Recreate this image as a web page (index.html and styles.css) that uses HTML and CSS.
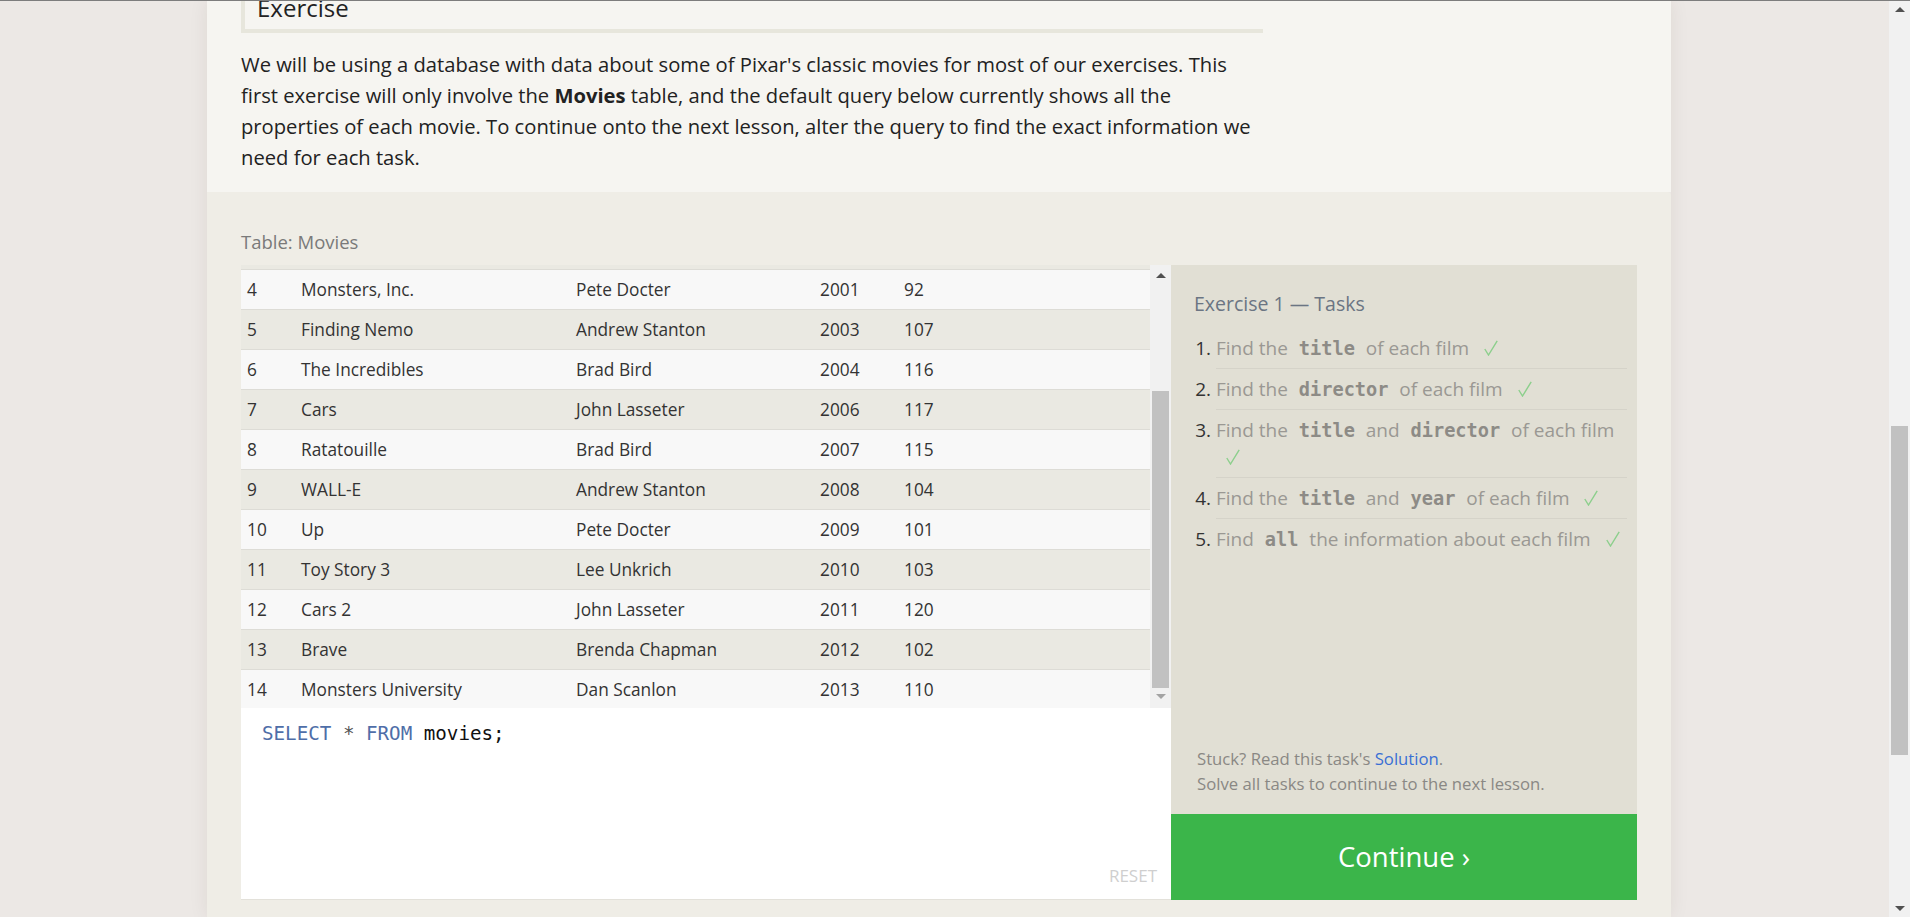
FILE: index.html
```html
<!DOCTYPE html>
<html lang="en">
<head>
<meta charset="utf-8">
<title>SQLBolt - Lesson 1</title>
<link rel="stylesheet" href="styles.css">
</head>
<body>
<div class="viewport">
  <div class="page">
    <div class="column">
      <section class="intro">
        <h2 class="box-title">Exercise</h2>
        <p class="lead">We will be using a database with data about some of Pixar's classic movies for most of our exercises. This first exercise will only involve the <strong>Movies</strong> table, and the default query below currently shows all the properties of each movie. To continue onto the next lesson, alter the query to find the exact information we need for each task.</p>
      </section>
      <section class="exercise">
        <div class="table-label">Table: Movies</div>
        <div class="workspace">
          <div class="left">
            <div class="table-wrap">
              <div class="table-scroll">
                <div class="rows">
                  <div class="row"><span>1</span><span>Toy Story</span><span>John Lasseter</span><span>1995</span><span>81</span></div>
                  <div class="row"><span>2</span><span>A Bug's Life</span><span>John Lasseter</span><span>1998</span><span>95</span></div>
                  <div class="row"><span>3</span><span>Toy Story 2</span><span>John Lasseter</span><span>1999</span><span>93</span></div>
                  <div class="row"><span>4</span><span>Monsters, Inc.</span><span>Pete Docter</span><span>2001</span><span>92</span></div>
                  <div class="row"><span>5</span><span>Finding Nemo</span><span>Andrew Stanton</span><span>2003</span><span>107</span></div>
                  <div class="row"><span>6</span><span>The Incredibles</span><span>Brad Bird</span><span>2004</span><span>116</span></div>
                  <div class="row"><span>7</span><span>Cars</span><span>John Lasseter</span><span>2006</span><span>117</span></div>
                  <div class="row"><span>8</span><span>Ratatouille</span><span>Brad Bird</span><span>2007</span><span>115</span></div>
                  <div class="row"><span>9</span><span>WALL-E</span><span>Andrew Stanton</span><span>2008</span><span>104</span></div>
                  <div class="row"><span>10</span><span>Up</span><span>Pete Docter</span><span>2009</span><span>101</span></div>
                  <div class="row"><span>11</span><span>Toy Story 3</span><span>Lee Unkrich</span><span>2010</span><span>103</span></div>
                  <div class="row"><span>12</span><span>Cars 2</span><span>John Lasseter</span><span>2011</span><span>120</span></div>
                  <div class="row"><span>13</span><span>Brave</span><span>Brenda Chapman</span><span>2012</span><span>102</span></div>
                  <div class="row"><span>14</span><span>Monsters University</span><span>Dan Scanlon</span><span>2013</span><span>110</span></div>
                </div>
              </div>
              <div class="vscroll">
                <div class="sb-btn"><span class="tri tri-up"></span></div>
                <div class="sb-track"><div class="sb-thumb"></div></div>
                <div class="sb-btn sb-btn-down"><span class="tri tri-down"></span></div>
              </div>
            </div>
            <div class="editor">
              <div class="code"><span class="kw">SELECT</span> <span class="op">*</span> <span class="kw">FROM</span> movies;</div>
              <div class="reset">RESET</div>
            </div>
          </div>
          <div class="right">
            <div class="tasks">
              <h3 class="tasks-title">Exercise 1 — Tasks</h3>
              <ol class="task-list">
                <li>Find the <code>title</code> of each film <span class="check"><svg viewBox="0 0 14 16" width="14" height="16"><polyline points="0.8,9 4.5,15 13.2,0.8"/></svg></span></li>
                <li>Find the <code>director</code> of each film <span class="check"><svg viewBox="0 0 14 16" width="14" height="16"><polyline points="0.8,9 4.5,15 13.2,0.8"/></svg></span></li>
                <li>Find the <code>title</code> and <code>director</code> of each film <span class="check"><svg viewBox="0 0 14 16" width="14" height="16"><polyline points="0.8,9 4.5,15 13.2,0.8"/></svg></span></li>
                <li>Find the <code>title</code> and <code>year</code> of each film <span class="check"><svg viewBox="0 0 14 16" width="14" height="16"><polyline points="0.8,9 4.5,15 13.2,0.8"/></svg></span></li>
                <li>Find <code>all</code> the information about each film <span class="check"><svg viewBox="0 0 14 16" width="14" height="16"><polyline points="0.8,9 4.5,15 13.2,0.8"/></svg></span></li>
              </ol>
              <div class="stuck">
                <div>Stuck? Read this task's <a href="#">Solution</a>.</div>
                <div>Solve all tasks to continue to the next lesson.</div>
              </div>
            </div>
            <div class="continue">Continue ›</div>
          </div>
        </div>
      </section>
    </div>
  </div>
  <div class="page-scrollbar">
    <div class="psb-btn"><span class="tri tri-up"></span></div>
    <div class="psb-track"><div class="psb-thumb"></div></div>
    <div class="psb-btn"><span class="tri tri-down"></span></div>
  </div>
</div>
</body>
</html>
```

FILE: styles.css
```css
* { box-sizing: border-box; }

html, body {
  margin: 0;
  padding: 0;
  height: 100%;
  overflow: hidden;
}

body {
  background: #ece8e5;
  font-family: "Open Sans", "Noto Sans", sans-serif;
  color: #222;
  border-top: 1px solid #7d7d7d;
}

.viewport {
  display: flex;
  height: 916px;
}

.page {
  flex: 1;
  padding-left: 207px;
  overflow: hidden;
}

.column {
  width: 1464px;
  height: 100%;
  display: flex;
  flex-direction: column;
  box-shadow: 0 0 18px rgba(60, 40, 30, 0.08);
}

/* intro */
.intro {
  background: #f6f5f1;
  padding: 0 34px 18px 34px;
}

.box-title {
  margin: -9px 0 0 0;
  width: 1022px;
  font-size: 24px;
  font-weight: 400;
  line-height: 32px;
  padding: 0 0 5px 12px;
  border-left: 4px solid #e7e6dc;
  border-bottom: 4px solid #e7e6dc;
  color: #222;
}

.lead {
  margin: 15.5px 0 0 0;
  width: 1022px;
  font-size: 20.2px;
  line-height: 31.3px;
  color: #222;
}

.lead strong { font-weight: 700; }

/* exercise */
.exercise {
  flex: 1;
  background: #efede6;
  padding: 38px 34px 0 34px;
  border-radius: 0 4px 0 0;
}

.table-label {
  font-size: 18.5px;
  line-height: 24px;
  color: #7a7a7a;
  margin-bottom: 11px;
}

.workspace {
  display: flex;
  height: 635px;
}

.left {
  width: 930px;
  display: flex;
  flex-direction: column;
}

.table-wrap {
  height: 443px;
  display: flex;
  background: #e7e5de;
}

.table-scroll {
  width: 909px;
  overflow: hidden;
}

.rows {
  margin-top: -115px;
}

.row {
  display: grid;
  grid-template-columns: 54px 275px 244px 84px 1fr;
  height: 40px;
  align-items: center;
  border-bottom: 1px solid #dddcd6;
  font-size: 17.3px;
  color: #333;
  background: #f8f8f8;
}

.row:nth-child(odd) { background: #eae9e2; }

.row span { padding-left: 6px; white-space: nowrap; }

.vscroll {
  width: 21px;
  background: #f1f1f1;
  display: flex;
  flex-direction: column;
}

.sb-btn {
  height: 21px;
  display: flex;
  align-items: center;
  justify-content: center;
}

.sb-btn-down { height: 17px; align-items: flex-start; padding-top: 3px; }

.sb-track {
  flex: 1;
  padding: 105px 2px 3px 2px;
}

.sb-thumb {
  height: 297px;
  background: #c1c1c1;
}

.tri {
  width: 0;
  height: 0;
  border-left: 5px solid transparent;
  border-right: 5px solid transparent;
}

.tri-up { border-bottom: 5px solid #505050; }
.tri-down { border-top: 5px solid #a3a3a3; }

.editor {
  flex: 1;
  background: #fff;
  border-bottom: 1px solid #e3e1da;
  display: flex;
  flex-direction: column;
  justify-content: space-between;
  padding: 14px 14px 12px 21px;
}

.code {
  font-family: "DejaVu Sans Mono", "Liberation Mono", monospace;
  font-size: 19.2px;
  line-height: 24px;
  color: #111;
}

.code .kw { color: #4f6ea8; }
.code .op { color: #555; }

.reset {
  align-self: flex-end;
  font-size: 17px;
  line-height: 22px;
  color: #cfcfcf;
}

/* right panel */
.right {
  width: 466px;
  display: flex;
  flex-direction: column;
}

.tasks {
  flex: 1;
  background: #e1dfd4;
  padding: 26px 10px 18px 23px;
  display: flex;
  flex-direction: column;
}

.tasks-title {
  margin: 0 0 11.5px 0;
  font-size: 19.5px;
  font-weight: 400;
  line-height: 26px;
  color: #6b7583;
}

.task-list {
  margin: 0;
  padding: 0 0 0 22px;
  font-size: 19px;
  color: #9a9893;
}

.task-list li {
  line-height: 27px;
  padding: 7px 0 6px 0;
  border-bottom: 1px solid #d5d3c9;
}

.task-list li:last-child { border-bottom: none; }

.task-list li::marker { color: #333; }

.task-list code {
  font-family: "DejaVu Sans Mono", "Liberation Mono", monospace;
  font-weight: 700;
  font-size: 18.6px;
  line-height: 1;
  color: #8d8b86;
  padding: 0 6px;
}

.check {
  display: inline-block;
  margin-left: 10px;
  vertical-align: -1px;
  line-height: 1;
}

.check svg {
  display: block;
  fill: none;
  stroke: #8ccf8c;
  stroke-width: 1.4;
}

.stuck {
  margin-top: auto;
  padding-left: 3px;
  font-size: 16.7px;
  line-height: 25px;
  color: #8a8884;
}

.stuck a { color: #3a6fd4; text-decoration: none; }

.continue {
  height: 86px;
  background: #3bb54a;
  color: #fff;
  font-size: 27.5px;
  display: flex;
  align-items: center;
  justify-content: center;
}

/* page scrollbar */
.page-scrollbar {
  width: 21px;
  background: #f1f1f1;
  display: flex;
  flex-direction: column;
}

.psb-btn {
  height: 17px;
  display: flex;
  align-items: center;
  justify-content: center;
}

.psb-btn .tri-down { border-top-color: #505050; }

.psb-track {
  flex: 1;
  padding: 408px 2px 0 2px;
}

.psb-thumb {
  height: 329px;
  background: #c1c1c1;
}
```
